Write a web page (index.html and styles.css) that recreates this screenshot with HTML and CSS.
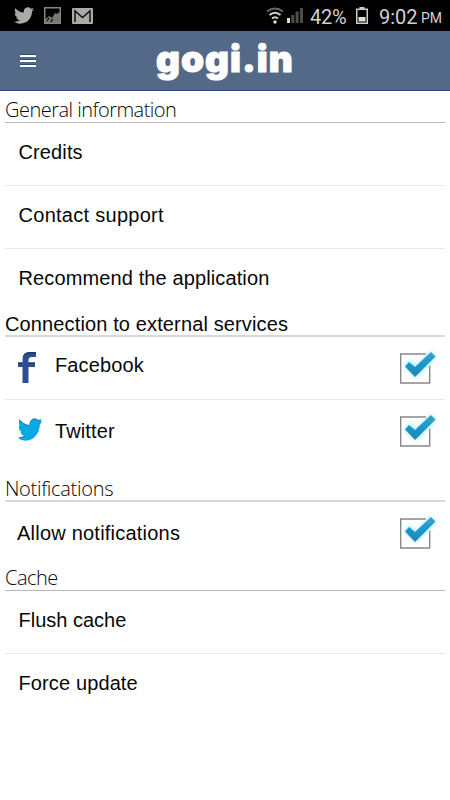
FILE: index.html
```html
<!DOCTYPE html>
<html lang="en">
<head>
<meta charset="utf-8">
<title>gogi.in settings</title>
<link rel="stylesheet" href="styles.css">
</head>
<body>
<svg class="defs" width="0" height="0">
  <defs>
    <symbol id="bird" viewBox="0 2 24 20"><path d="M23.953 4.57a10 10 0 01-2.825.775 4.958 4.958 0 002.163-2.723c-.951.555-2.005.959-3.127 1.184a4.92 4.92 0 00-8.384 4.482C7.69 8.095 4.067 6.13 1.64 3.162a4.822 4.822 0 00-.666 2.475c0 1.71.87 3.213 2.188 4.096a4.904 4.904 0 01-2.228-.616v.06a4.923 4.923 0 003.946 4.827 4.996 4.996 0 01-2.212.085 4.936 4.936 0 004.604 3.417 9.867 9.867 0 01-6.102 2.105c-.39 0-.779-.023-1.17-.067a13.995 13.995 0 007.557 2.209c9.053 0 13.998-7.496 13.998-13.985 0-.21 0-.42-.015-.63A9.935 9.935 0 0024 4.59z"/></symbol>
    <linearGradient id="blue" x1="0" y1="0" x2="0" y2="1"><stop offset="0" stop-color="#3fa3cb"/><stop offset=".5" stop-color="#1699cc"/><stop offset="1" stop-color="#2586ad"/></linearGradient>
    <filter id="glow" x="-30%" y="-30%" width="160%" height="160%"><feGaussianBlur stdDeviation="2"/></filter>
    <symbol id="check" viewBox="0 0 44 38">
      <path d="M30 6H4.700v29h29V17.500" fill="none" stroke="#888" stroke-width="1.4"/>
      <path d="M8 18l6-6 6 6 14-15 6 6-20 21z" fill="#9be4ff" opacity=".8" filter="url(#glow)"/>
      <path d="M9 18.500l4-4.500 6 5L35 4l4.500 4.500L19 29z" fill="url(#blue)"/>
    </symbol>
  </defs>
</svg>
<div class="status">
  <svg class="s-bird" width="20" height="17"><use href="#bird"/></svg>
  <svg class="s-pic" width="17" height="17" viewBox="0 0 17 17"><rect x=".75" y=".75" width="15.500" height="15.500" fill="none" stroke="#858585" stroke-width="1.500"/><path d="M1 12l2-1 2-2 2 1 1 1 3-5 2 1 2-2 1 2v9H1z" fill="#777"/><path d="M3 14l2-3M7 15l1.500-3" stroke="#000" stroke-width="1.200"/></svg>
  <svg class="s-mail" width="21" height="16" viewBox="0 0 21 16"><rect width="21" height="16" rx="1" fill="#aaa"/><path d="M3 14V3l7.500 6.500L18 3v11" fill="none" stroke="#111" stroke-width="1.500"/></svg>
  <span class="grow"></span>
  <svg class="s-wifi" width="18" height="17" viewBox="0 0 18 17" fill="none" stroke-width="2"><path d="M1 4.500Q9-1.500 17 4.500" stroke="#666"/><path d="M3.500 8Q9 3.500 14.500 8M6 11.500q3-2.500 6 0" stroke="#d4d4d4"/><circle cx="9" cy="15" r="1.700" fill="#ddd"/></svg>
  <svg class="s-signal" width="16" height="15" viewBox="0 0 16 15" fill="#4d4d4d"><path d="M4.300 7h3v8h-3zM8.600 3.500h3V15h-3zM13 0h3v15h-3z"/><path fill="#ddd" d="M0 10h3v5H0z"/></svg>
  <span class="pct">42%</span>
  <svg class="s-bat" width="12" height="17" viewBox="0 0 12 17"><path d="M3.500 0h5v1.500H12V17H0V1.500h3.500zM1.500 3v12.500h9V3z" fill="#ccc" fill-rule="evenodd"/><path d="M2.500 10h7v4.500h-7z" fill="#ddd"/></svg>
  <span class="time">9:02</span><span class="pm">PM</span>
</div>
<header class="bar">
  <div class="burger"><i></i><i></i><i></i></div>
  <h1 class="logo">gogi.in</h1>
</header>
<main>
  <h2 class="light general">General information</h2>
  <div class="row"><span>Credits</span></div>
  <div class="row"><span class="contact">Contact support</span></div>
  <div class="row last"><span>Recommend the application</span></div>
  <h2 class="connection">Connection to external services</h2>
  <div class="row service"><svg class="fb" width="18" height="31" viewBox="0 0 18 31"><path d="M4.500 31V15H0v-4.500h4.500V7Q4.500 0 12 0h6v5h-4q-3.500 0-3.500 3v2.500H17V15h-6.500v16z" fill="#2a5092"/><path d="M5 5q2-5 7-5h6v1.800h-6Q7 2 5 5zM0 10.500h4.500V12H0zM10.500 10.500H17V12h-6.500z" fill="#183c78"/></svg><span class="facebook">Facebook</span><svg class="check" width="44" height="38"><use href="#check"/></svg></div>
  <div class="row service second"><svg class="tw" width="24" height="22" viewBox="0 0 24 20" preserveAspectRatio="none"><use href="#bird" width="24" height="20"/></svg><span class="twitter">Twitter</span><svg class="check" width="44" height="38"><use href="#check"/></svg></div>
  <h2 class="light notifications">Notifications</h2>
  <div class="row allow-row"><span class="allow">Allow notifications</span><svg class="check" width="44" height="38"><use href="#check"/></svg></div>
  <h2 class="light cache">Cache</h2>
  <div class="row"><span class="flush">Flush cache</span></div>
  <div class="row last"><span class="force">Force update</span></div>
</main>
</body>
</html>
```
FILE: styles.css
```css
* { box-sizing: border-box; }
body { margin: 0; width: 450px; height: 800px; background: #fff; overflow: hidden; font-family: "Liberation Sans", Arial, sans-serif; color: #080808; }
svg { display: block; flex: none; }
.defs { position: absolute; }
.status { height: 31px; background: #000; display: flex; align-items: flex-start; padding: 7px 8px 0 14px; color: #d0d0d0; font-family: Roboto, sans-serif; }
.s-bird { fill: #aaa; }
.s-pic { margin-left: 10px; }
.s-mail { margin: 1px 0 0 11px; }
.grow { flex: 1; }
.s-signal { margin: 1px 0 0 3px; }
.pct, .time, .pm { line-height: 24px; margin-top: -2px; white-space: nowrap; }
.pct { font-size: 20px; width: 46px; margin-left: 7px; letter-spacing: -.3px; }
.time { font-size: 20px; width: 42px; margin-left: 11px; }
.pm { font-size: 14px; width: 21px; margin-top: -1px; }
.bar { height: 60px; background: #546988; border-bottom: 1px solid #294c7d; display: flex; align-items: flex-start; }
.burger { margin: 23px 0 0 20px; width: 16px; display: grid; gap: 2px; }
.burger i { height: 3px; background: #fff; border-top: 1px solid #17518a; }
.logo { margin: 6px 0 0 120px; font: 900 37px/44px Inter, sans-serif; color: #fff; letter-spacing: 1px; -webkit-text-stroke: 1px #fff; white-space: nowrap; }
main { padding: 0 5px; }
h2 { margin: 0; height: 32px; border-bottom: 1px solid #b7b7b7; font-weight: 400; font-size: 20px; line-height: 24px; padding-top: 7px; white-space: nowrap; }
.light { font-family: "Open Sans", sans-serif; font-weight: 300; letter-spacing: -.52px; }
.row { height: 63px; border-bottom: 1px solid #e8e8e8; padding: 17px 0 0 13.500px; display: flex; align-items: flex-start; font-size: 20px; line-height: 24px; letter-spacing: .12px; white-space: nowrap; }
.row.last { border: 0; height: 62px; }
.contact { letter-spacing: .28px; }
.connection { height: 26px; padding-top: 1px; border-bottom: 2px solid #d8d8d8; letter-spacing: .13px; }
.service { padding: 16px 0 0 13px; }
.fb { margin-top: -1px; }
.facebook { margin-left: 19px; }
.twitter { margin-left: 13px; margin-top: 3px; }
.tw { margin-top: 3px; fill: #08a7e5; filter: drop-shadow(0 -1px 0 #247b9b); }
.check { margin: -5px 5px 0 auto; }
.second { border: 0; height: 71px; }
.notifications { height: 31px; padding-top: 6px; border-bottom: 2px solid #d8d8d8; letter-spacing: -.3px; }
.allow-row { border: 0; height: 63px; padding: 19px 0 0 12px; }
.allow-row .check { margin-top: -8px; }
.allow { letter-spacing: .22px; }
.cache { height: 26px; padding-top: 1px; }
.flush { letter-spacing: 0; }
```
